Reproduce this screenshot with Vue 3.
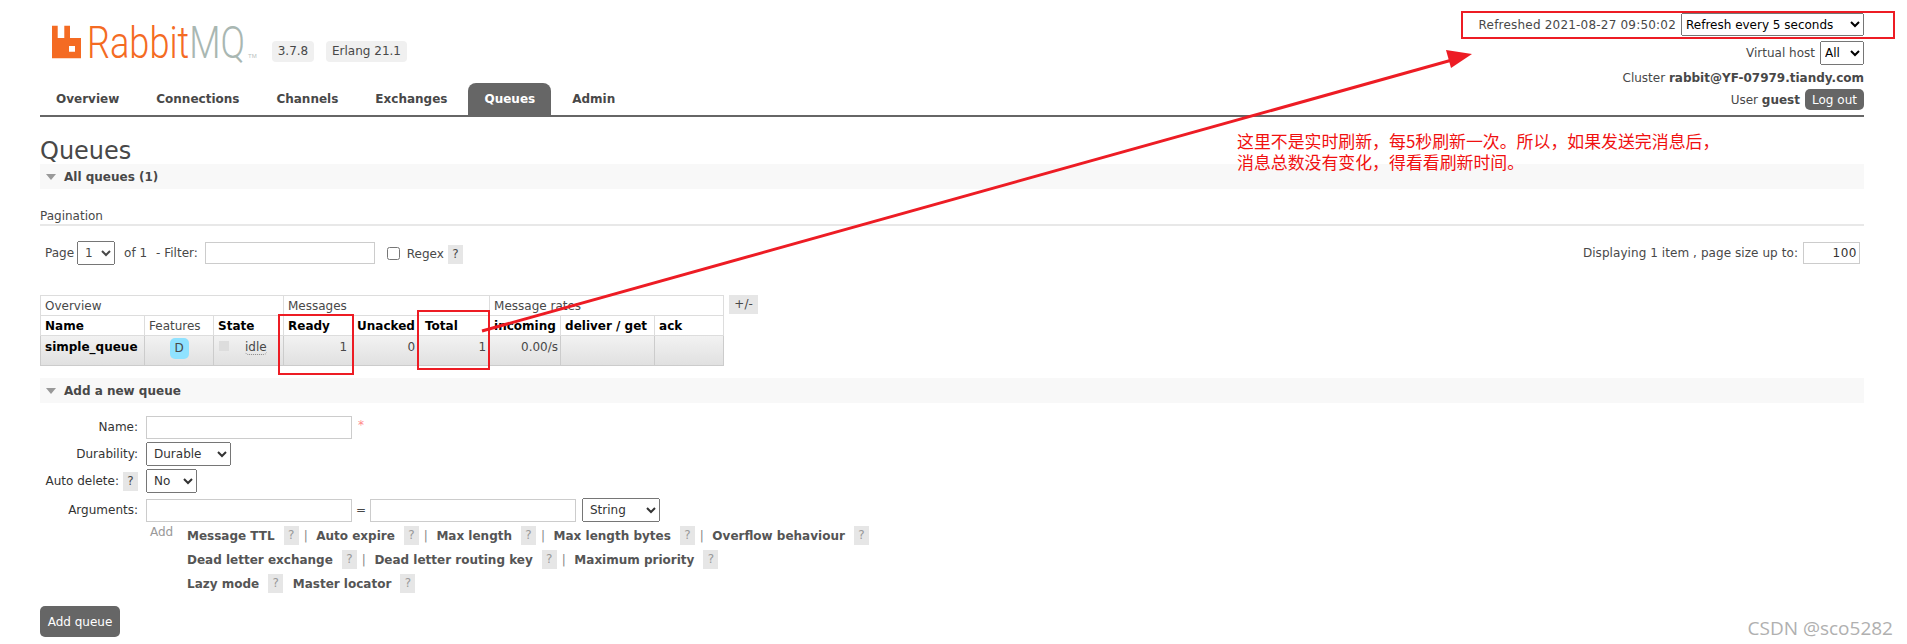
<script setup>
const tabs = ['Overview', 'Connections', 'Channels', 'Exchanges', 'Queues', 'Admin'];

const argRows = [
  ['Message TTL', 'Auto expire', 'Max length', 'Max length bytes', 'Overflow behaviour'],
  ['Dead letter exchange', 'Dead letter routing key', 'Maximum priority'],
  ['Lazy mode', 'Master locator']
];

const columns = [
  { label: 'Name', strong: true, width: 104 },
  { label: 'Features', width: 69 },
  { label: 'State', strong: true, width: 70 },
  { label: 'Ready', strong: true, width: 69 },
  { label: 'Unacked', strong: true, width: 65 },
  { label: 'Total', strong: true, width: 72, cls: 'total' },
  { label: 'incoming', strong: true, width: 71 },
  { label: 'deliver / get', strong: true, width: 94 },
  { label: 'ack', strong: true, width: 69 }
];
</script>

<template>
  <div class="page">
    <header class="header">
      <div class="brand">
        <div class="logo-row">
          <svg class="logo" width="212" height="40" viewBox="0 0 212 40">
            <path fill="#f46b23" fill-rule="evenodd" d="M0 .7h5.700v12.300h6.600V.7h5.700v12.300H29v20.300H0z M17 21v5.700h6V21z" />
            <text x="35" y="32.500" class="logo-word" fill="#f46b23" textLength="158" lengthAdjust="spacingAndGlyphs">Rabbit<tspan fill="#a9b7b2">MQ</tspan></text>
            <text x="196" y="33" class="logo-tm" fill="#b8c2be">TM</text>
          </svg>
          <span class="badge version">3.7.8</span>
          <span class="badge">Erlang 21.1</span>
        </div>
        <nav class="tabs">
          <a v-for="tab in tabs" :key="tab" class="tab" :class="{ active: tab === 'Queues' }">{{ tab }}</a>
        </nav>
      </div>
      <div class="status">
        <div class="status-row first">
          <span class="refreshed">Refreshed 2021-08-27 09:50:02</span>
          <select class="refresh"><option>Refresh every 5 seconds</option></select>
        </div>
        <div class="status-row vhost-row">
          <span>Virtual host</span>
          <select class="vhost"><option>All</option></select>
        </div>
        <div class="status-row cluster">Cluster&nbsp;<b>rabbit@YF-07979.tiandy.com</b></div>
        <div class="status-row user">
          <span>User <b>guest</b></span>
          <button class="btn logout">Log out</button>
        </div>
      </div>
    </header>

    <h1>Queues</h1>
    <div class="section-bar"><i class="triangle"></i>All queues (1)</div>

    <h3 class="pagination-title">Pagination</h3>
    <div class="pagination">
      <div class="pagination-left">
        <span class="page-label">Page</span>
        <select class="page-select"><option>1</option></select>
        <span class="of">of 1</span>
        <span class="filter">- Filter:</span>
        <input class="filter-input" type="text" />
        <input class="regex" type="checkbox" />
        <span class="regex-label">Regex</span>
        <span class="help dark">?</span>
      </div>
      <div class="pagination-right">
        <span class="displaying">Displaying 1 item , page size up to:</span>
        <input class="size-input" type="text" value="100" />
      </div>
    </div>

    <div class="table-row">
      <table class="queues">
        <colgroup>
          <col v-for="col in columns" :key="col.label" :style="{ width: col.width + 'px' }" />
        </colgroup>
        <thead>
          <tr class="groups">
            <th colspan="3">Overview</th>
            <th colspan="3">Messages</th>
            <th colspan="3">Message rates</th>
          </tr>
          <tr class="cols">
            <th v-for="col in columns" :key="col.label" :class="[col.cls, { light: !col.strong }]">{{ col.label }}</th>
          </tr>
        </thead>
        <tbody>
          <tr>
            <td class="q-name">simple_queue</td>
            <td class="center"><span class="feature">D</span></td>
            <td class="state"><i class="state-dot"></i><span class="idle">idle</span></td>
            <td class="num ready">1</td>
            <td class="num">0</td>
            <td class="num total-num">1</td>
            <td class="num">0.00/s</td>
            <td></td>
            <td></td>
          </tr>
        </tbody>
      </table>
      <span class="plus-minus">+/-</span>
    </div>

    <div class="section-bar add-bar"><i class="triangle"></i>Add a new queue</div>

    <form class="form" @submit.prevent>
      <label class="form-label">Name:</label>
      <div class="field"><input class="text-input" type="text" /><span class="required">*</span></div>

      <label class="form-label">Durability:</label>
      <div class="field"><select class="durability"><option>Durable</option></select></div>

      <label class="form-label">Auto delete: <span class="help dark">?</span></label>
      <div class="field auto-field"><select class="auto-delete"><option>No</option></select></div>

      <label class="form-label">Arguments:</label>
      <div class="field args">
        <input class="text-input" type="text" />
        <span class="equals">=</span>
        <input class="text-input" type="text" />
        <select class="arg-type"><option>String</option></select>
      </div>

      <span></span>
      <div class="arg-help">
        <span class="add-link">Add</span>
        <div class="arg-rows">
          <div v-for="(row, r) in argRows" :key="r" class="arg-row">
            <template v-for="(name, i) in row" :key="name">
              <span class="arg-name">{{ name }}</span>
              <span class="help">?</span>
              <span v-if="r < 2 && i < row.length - 1" class="pipe">|</span>
            </template>
          </div>
        </div>
      </div>
    </form>

    <button class="btn add-queue">Add queue</button>

    <!-- 红色标注层 -->
    <div class="mark mark-refresh"></div>
    <div class="mark mark-ready"></div>
    <div class="mark mark-total"></div>
    <svg class="arrow" width="1907" height="644" viewBox="0 0 1907 644">
      <line x1="482" y1="331" x2="1452" y2="60" stroke="#ed1c24" stroke-width="3" />
      <path d="M1472 54 L1446 50 L1451 68 Z" fill="#ed1c24" />
    </svg>
    <p class="note">这里不是实时刷新，每5秒刷新一次。所以，如果发送完消息后，<br />消息总数没有变化，得看看刷新时间。</p>
    <span class="watermark">CSDN @sco5282</span>
  </div>
</template>

<style>
html, body {
  margin: 0;
  background: #fff;
}
</style>

<style scoped>
.page {
  position: relative;
  width: 1907px;
  height: 644px;
  box-sizing: border-box;
  padding: 0 43px 0 40px;
  overflow: hidden;
  font: 12px "DejaVu Sans", Verdana, sans-serif;
  color: #484848;
}

.header {
  display: flex;
  justify-content: space-between;
  height: 117px;
  box-sizing: border-box;
  border-bottom: 2px solid #666;
}

.brand {
  display: flex;
  flex-direction: column;
  justify-content: space-between;
}

.logo-row {
  display: flex;
  align-items: flex-start;
  padding: 25px 0 0 12px;
}

.logo {
  display: block;
  margin-right: 8px;
}

.logo-word {
  font: 300 44px Roboto, "Liberation Sans", sans-serif;
}

.logo-tm {
  font: 6px "Liberation Sans", sans-serif;
}

.badge {
  margin: 16px 12px 0 0;
  padding: 0 6px;
  height: 21px;
  line-height: 21px;
  border-radius: 4px;
  background: #f0f0f0;
}

.badge.version {
  box-sizing: border-box;
  width: 42px;
  padding: 0;
  text-align: center;
}

.tabs {
  display: flex;
  padding-left: 5px;
}

.tab {
  padding: 0 11px;
  margin-right: 15px;
  height: 32px;
  line-height: 32px;
  font-weight: bold;
  color: #484848;
  border-radius: 8px 8px 0 0;
}

.tab.active {
  padding: 0 16px;
  margin: 0 10px 0 -5px;
  background: #666;
  color: #fff;
}

.status {
  display: flex;
  flex-direction: column;
  align-items: flex-end;
  padding-top: 13px;
}

.status-row {
  display: flex;
  align-items: center;
  justify-content: flex-end;
  gap: 5px;
}

.status-row.first {
  height: 23px;
}

.refreshed {
  letter-spacing: 0.2px;
}

.status-row.vhost-row {
  margin-top: 5px;
}

.status-row.cluster {
  gap: 0;
  margin-top: 3px;
  height: 20px;
}

.status-row.user {
  margin-top: 1px;
  height: 21px;
}

.status select {
  font: 12px "DejaVu Sans", Verdana, sans-serif;
  box-sizing: border-box;
  color: #000;
}

.refresh {
  width: 183px;
  height: 23px;
}

.vhost {
  width: 44px;
  height: 24px;
}

.btn {
  border: 0;
  background: #666;
  color: #fff;
  font: 12px "DejaVu Sans", Verdana, sans-serif;
  padding: 0;
}

.logout {
  width: 59px;
  height: 21px;
  border-radius: 5px;
}

h1 {
  margin: 20px 0 0;
  height: 27px;
  line-height: 29px;
  font-size: 24px;
  font-weight: normal;
  color: #484848;
}

.section-bar {
  display: flex;
  align-items: center;
  height: 25px;
  background: #f8f8f8;
  font-weight: bold;
}

.triangle {
  width: 0;
  height: 0;
  margin: 0 8px 0 6px;
  border-left: 5.500px solid transparent;
  border-right: 5.500px solid transparent;
  border-top: 6px solid #999;
}

.pagination-title {
  margin: 20px 0 0;
  padding-bottom: 2px;
  height: 13px;
  line-height: 14px;
  font-size: 12px;
  font-weight: normal;
  border-bottom: 2px solid #e8e8e8;
}

.pagination {
  display: flex;
  justify-content: space-between;
  align-items: center;
  height: 24px;
  margin-top: 15px;
  padding-right: 4px;
}

.pagination-left,
.pagination-right {
  display: flex;
  align-items: center;
}

.page-label {
  margin-left: 5px;
}

.page-select {
  box-sizing: border-box;
  width: 38px;
  height: 24px;
  margin: 0 0 0 3px;
  padding-left: 3px;
  font: 12px "DejaVu Sans", Verdana, sans-serif;
  color: #484848;
}

.of {
  margin-left: 9px;
}

.filter {
  margin-left: 9px;
}

.filter-input {
  box-sizing: border-box;
  width: 170px;
  height: 22px;
  margin: 0 0 0 7px;
  border: 1px solid #ccc;
}

.regex {
  width: 13px;
  height: 13px;
  margin: 0 0 0 12px;
}

.regex-label {
  margin: 2px 0 0 7px;
}

.help {
  display: inline-block;
  box-sizing: border-box;
  width: 15px;
  height: 19px;
  line-height: 19px;
  text-align: center;
  background: #e6e6e6;
  color: #999;
  font-weight: normal;
}

.help.dark {
  color: #484848;
}

.regex-label + .help {
  margin: 2px 0 0 4px;
}

.pagination-right {
  gap: 5px;
}

.displaying {
  letter-spacing: 0.07px;
}

.size-input {
  box-sizing: border-box;
  width: 57px;
  height: 22px;
  padding: 0 2px;
  text-align: right;
  font: 12px "DejaVu Sans", Verdana, sans-serif;
  letter-spacing: 0.5px;
  color: #333;
  border: 1px solid #ccc;
}

.table-row {
  display: flex;
  align-items: flex-start;
  gap: 5px;
  margin-top: 30px;
}

.queues {
  width: 683px;
  table-layout: fixed;
  border-collapse: collapse;
}

.queues th,
.queues td {
  padding: 0 4px;
  border: 1px solid #ddd;
  text-align: left;
  white-space: nowrap;
}

.groups th {
  height: 19px;
  font-weight: normal;
}

.cols th {
  height: 19px;
  color: #000;
}

.cols th.light {
  font-weight: normal;
  color: #484848;
}

.cols th.total {
  padding-left: 7px;
}

.queues tbody tr {
  background: linear-gradient(#f2f2f2, #e0e0e0);
}

.queues td {
  height: 25px;
  padding-top: 4px;
  vertical-align: top;
  border-color: #ccc;
}

.q-name {
  font-weight: bold;
  color: #000;
}

.center {
  text-align: center !important;
}

.feature {
  display: inline-block;
  width: 19px;
  height: 21px;
  margin-top: -2px;
  line-height: 21px;
  border-radius: 5px;
  background: #8fe2ff;
  color: #484848;
  vertical-align: top;
}

.state-dot {
  display: inline-block;
  width: 10px;
  height: 10px;
  margin: 1px 16px 0 1px;
  background: #ddd;
  vertical-align: top;
}

.idle {
  border-bottom: 1px dotted #888;
  border-radius: 0 0 4px 4px;
}

.num {
  text-align: right !important;
  padding-right: 2px !important;
}

.num.ready {
  padding-right: 5px !important;
}

.num.total-num {
  padding-right: 3px !important;
}

.plus-minus {
  width: 29px;
  height: 19px;
  line-height: 19px;
  text-align: center;
  background: #e6e6e6;
}

.add-bar {
  margin-top: 12px;
}

.form {
  display: grid;
  grid-template-columns: 98px 1fr;
  column-gap: 8px;
  margin-top: 12px;
}

.form-label {
  display: flex;
  align-items: center;
  justify-content: flex-end;
  gap: 4px;
  white-space: nowrap;
  color: #333;
  height: 24px;
}

.field {
  display: flex;
  align-items: center;
  height: 24px;
  margin-bottom: 3px;
}

.auto-field {
  margin-bottom: 5px;
}

.text-input {
  box-sizing: border-box;
  width: 206px;
  height: 23px;
  border: 1px solid #ccc;
}

.required {
  align-self: flex-start;
  margin-left: 6px;
  margin-top: 3px;
  color: #f88;
}

.field select {
  box-sizing: border-box;
  height: 24px;
  padding-left: 3px;
  font: 12px "DejaVu Sans", Verdana, sans-serif;
  color: #333;
}

.durability {
  width: 85px;
}

.auto-delete {
  width: 51px;
}

.equals {
  width: 18px;
  text-align: center;
}

.arg-type {
  width: 78px;
  margin-left: 6px;
}

.arg-help {
  display: flex;
  margin-top: 1px;
}

.add-link {
  width: 41px;
  margin-top: -3px;
  padding-left: 4px;
  box-sizing: border-box;
  color: #999;
  line-height: 19px;
}

.arg-rows {
  display: flex;
  flex-direction: column;
  gap: 5px;
}

.arg-row {
  display: flex;
  align-items: center;
  height: 19px;
}

.arg-name {
  font-weight: bold;
  color: #555;
  margin-right: 9px;
}

.pipe {
  margin: 0 8.500px 0 5px;
  color: #888;
}

.arg-row .help + .arg-name {
  margin-left: 9.500px;
}

.add-queue {
  display: block;
  width: 80px;
  height: 31px;
  margin-top: 13px;
  border-radius: 5px;
}

/* 标注放在内容之上 */
.mark {
  position: absolute;
  box-sizing: border-box;
  border: 2px solid #ed1c24;
}

.mark-refresh {
  left: 1461px;
  top: 11px;
  width: 434px;
  height: 28px;
}

.mark-ready {
  left: 278px;
  top: 314px;
  width: 76px;
  height: 61px;
}

.mark-total {
  left: 417px;
  top: 310px;
  width: 73px;
  height: 60px;
}

.arrow {
  position: absolute;
  left: 0;
  top: 0;
  pointer-events: none;
}

.note {
  position: absolute;
  left: 1237px;
  top: 130px;
  margin: 0;
  font: 16.900px/21px "Noto Sans CJK SC", sans-serif;
  color: #f01010;
}

.watermark {
  position: absolute;
  right: 14px;
  top: 615px;
  font: 19px "Open Sans", sans-serif;
  color: #b0b0b0;
}
</style>
